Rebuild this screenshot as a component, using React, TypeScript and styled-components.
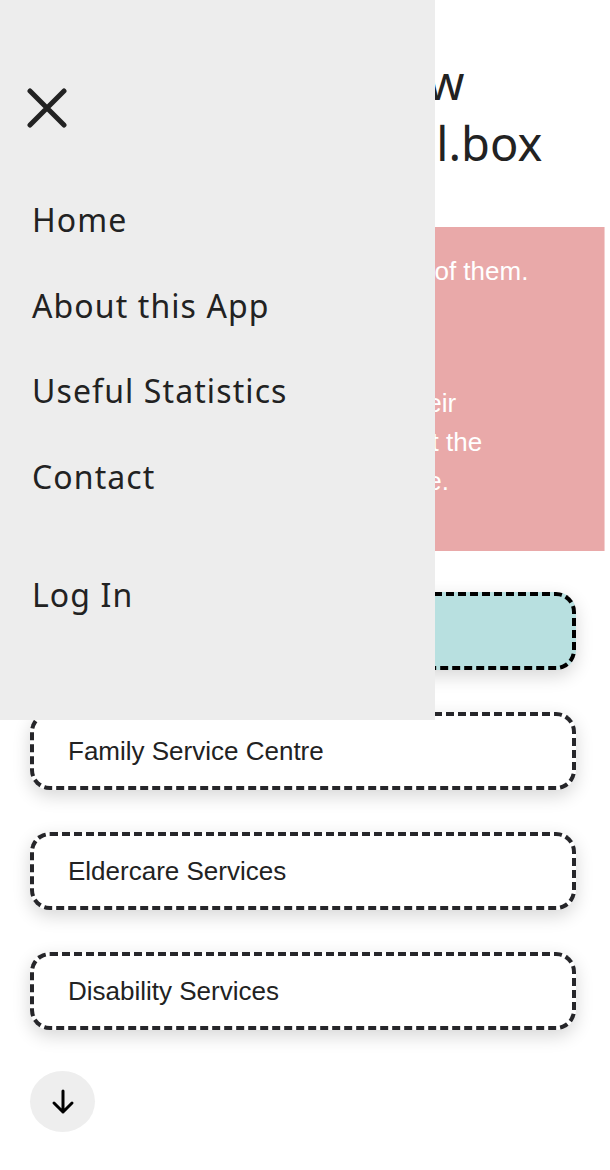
import React from "react";
import styled, { createGlobalStyle } from "styled-components";

const GlobalStyle = createGlobalStyle`
  html, body { margin: 0; padding: 0; background: #ffffff; }
  body { width: 610px; min-height: 1170px; overflow: hidden; }
  * { box-sizing: border-box; }
`;

const Page = styled.div`
  position: relative;
  width: 610px;
  min-height: 1170px;
  background: #ffffff;
`;

const Main = styled.main`
  display: flex;
  flex-direction: column;
  padding-top: 52px;
`;

const Title = styled.h1`
  margin: 0 0 53px 0;
  padding: 0 29px;
  font-family: "Noto Sans", sans-serif;
  font-weight: 400;
  font-size: 47px;
  line-height: 61px;
  color: #222222;
  white-space: nowrap;
`;

const Intro = styled.section`
  display: flex;
  flex-direction: column;
  gap: 15px;
  margin: 0 5px;
  padding: 25px 25px 50px 45px;
  background: #e9a9a9;
  color: #ffffff;
  font-family: "Liberation Sans", Arial, sans-serif;
  font-size: 26px;
  line-height: 39px;
  border-right: 1px solid #f3d0d0;
`;

const IntroText = styled.p`
  margin: 0;
  white-space: nowrap;
`;

const CardList = styled.div`
  display: flex;
  flex-direction: column;
  gap: 42px;
  margin: 41px 34px 0 30px;
`;

const Card = styled.button<{ $active?: boolean }>`
  display: flex;
  align-items: center;
  height: 78px;
  padding: 0 0 0 34px;
  border: 4px dashed ${(p) => (p.$active ? "#000000" : "#26262a")};
  border-radius: 20px;
  background: ${(p) => (p.$active ? "#b8e0e0" : "#ffffff")};
  box-shadow: 0 6px 18px rgba(0, 0, 0, 0.16);
  font-family: "Liberation Sans", Arial, sans-serif;
  font-size: 26px;
  color: #222222;
  text-align: left;
  cursor: pointer;
`;

const ScrollButton = styled.button`
  display: flex;
  align-items: center;
  justify-content: center;
  width: 65px;
  height: 61px;
  margin: 41px 0 0 30px;
  padding: 0;
  border: none;
  border-radius: 50%;
  background: #eeeeee;
  cursor: pointer;
`;

const Drawer = styled.nav`
  position: absolute;
  top: 0;
  left: 0;
  width: 435px;
  height: 720px;
  background: #ededed;
  display: flex;
  flex-direction: column;
  padding: 88px 0 0 27px;
  z-index: 10;
`;

const CloseButton = styled.button`
  width: 40px;
  height: 40px;
  padding: 0;
  border: none;
  background: transparent;
  display: block;
  cursor: pointer;
`;

const NavList = styled.ul`
  list-style: none;
  margin: 49px 0 0 0;
  padding: 0 0 0 5px;
  display: flex;
  flex-direction: column;
`;

const NavItem = styled.li<{ $spaced?: boolean }>`
  font-family: "Noto Sans", sans-serif;
  font-size: 32px;
  letter-spacing: 1.1px;
  line-height: 85.7px;
  height: 85.7px;
  color: #222222;
  margin-top: ${(p) => (p.$spaced ? "32px" : "0")};
`;

const CloseIcon = () => (
  <svg width="40" height="40" viewBox="0 0 40 40" fill="none">
    <path
      d="M3 3 L37 37 M37 3 L3 37"
      stroke="#222222"
      strokeWidth="5"
      strokeLinecap="round"
    />
  </svg>
);

const ArrowDownIcon = () => (
  <svg width="24" height="26" viewBox="0 0 24 26" fill="none">
    <path
      d="M12 2 V23 M3 14 L12 23 L21 14"
      stroke="#000000"
      strokeWidth="3"
      strokeLinecap="round"
      strokeLinejoin="round"
    />
  </svg>
);

const categories = [
  "Youth Services",
  "Family Service Centre",
  "Eldercare Services",
  "Disability Services",
];

export default function App() {
  return (
    <Page>
      <GlobalStyle />
      <Main>
        <Title>
          Go and see the new
          <br />
          communitiesportal.box
        </Title>
        <Intro>
          <IntroText>
            It can be hard to keep track of all of them.
            <br />
            Let us help you find your way.
          </IntroText>
          <IntroText>
            This app is here to help,
            <br />
            so that people can quickly find their
            <br />
            way around and learn more about the
            <br />
            services that best fit their own use.
          </IntroText>
        </Intro>
        <CardList>
          {categories.map((c, i) => (
            <Card key={c} $active={i === 0}>
              {c}
            </Card>
          ))}
        </CardList>
        <ScrollButton aria-label="Scroll down">
          <ArrowDownIcon />
        </ScrollButton>
      </Main>
      <Drawer>
        <CloseButton aria-label="Close menu">
          <CloseIcon />
        </CloseButton>
        <NavList>
          <NavItem>Home</NavItem>
          <NavItem>About this App</NavItem>
          <NavItem>Useful Statistics</NavItem>
          <NavItem>Contact</NavItem>
          <NavItem $spaced>Log In</NavItem>
        </NavList>
      </Drawer>
    </Page>
  );
}
